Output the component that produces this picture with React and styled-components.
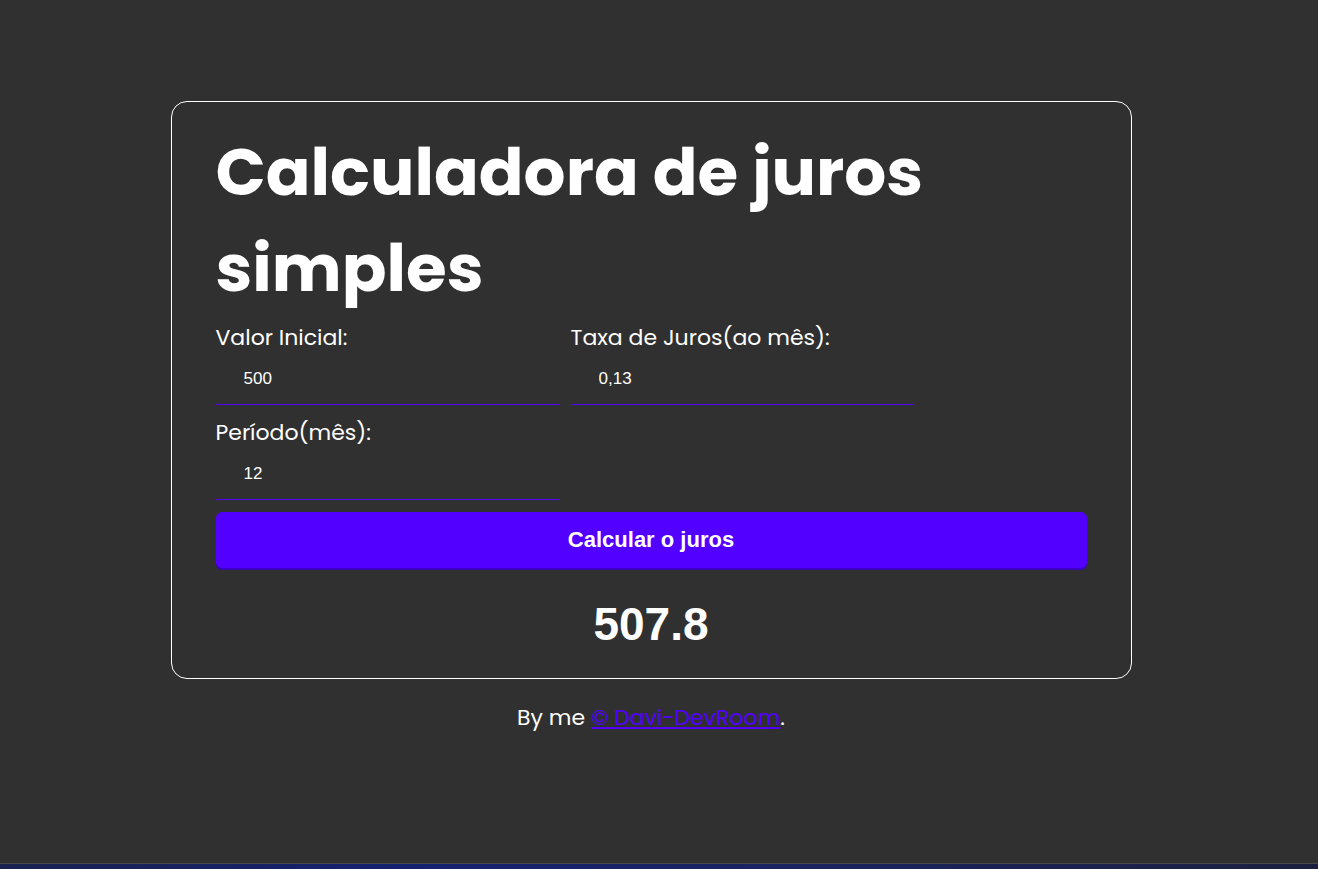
import React, { useState } from "react";
import styled, { createGlobalStyle } from "styled-components";

const GlobalStyle = createGlobalStyle`
  * { box-sizing: border-box; }
  html, body { margin: 0; padding: 0; height: 100%; }
  body {
    background: #303030;
    color: #fff;
    font-family: "Poppins", Inter, "Noto Sans", sans-serif;
    overflow: hidden;
  }
`;

const Page = styled.div`
  min-height: 100vh;
  display: flex;
  flex-direction: column;
`;

const Main = styled.main`
  flex: 1;
  padding: 101px 16px 0 0;
  display: flex;
  flex-direction: column;
  align-items: center;
`;

const Card = styled.section`
  width: 961px;
  border: 1px solid #fff;
  border-radius: 16px;
  padding: 22px 44px 27px;
`;

const Title = styled.h1`
  margin: 0 0 7px;
  font-size: 66px;
  line-height: 96px;
  font-weight: 700;
  max-width: 780px;
`;

const Fields = styled.div`
  display: grid;
  grid-template-columns: 343px 343px;
  column-gap: 12px;
  row-gap: 13px;
`;

const Field = styled.label`
  display: flex;
  flex-direction: column;
`;

const Label = styled.span`
  font-size: 22px;
  line-height: 30px;
  font-weight: 400;
`;

const Input = styled.input`
  height: 52px;
  background: transparent;
  border: none;
  border-bottom: 1px solid #5200ff;
  outline: none;
  color: #fff;
  padding: 0 0 0 28px;
  font-family: "Liberation Sans", Arial, sans-serif;
  font-size: 17px;
`;

const Button = styled.button`
  display: block;
  width: 100%;
  height: 56px;
  margin-top: 12px;
  border: none;
  border-radius: 6px;
  background: #5200ff;
  box-shadow: 0 2px 0 #3d00c0;
  color: #fff;
  font-family: "Liberation Sans", Arial, sans-serif;
  font-size: 22px;
  font-weight: 700;
  cursor: pointer;
`;

const Result = styled.h2`
  margin: 30px 0 0;
  text-align: center;
  font-family: "Liberation Sans", Arial, sans-serif;
  font-size: 46px;
  line-height: 53px;
  font-weight: 700;
`;

const Footer = styled.p`
  margin: 22px 0 0;
  font-size: 22px;
  line-height: 33px;
`;

const Link = styled.a`
  color: #5200ff;
  text-decoration: underline;
`;

const Taskbar = styled.div`
  height: 6px;
  border-top: 1px solid #4a4a4a;
  background: linear-gradient(90deg, #1a2350 0%, #142170 30%, #1a2460 60%, #1c2040 100%);
`;

export default function App() {
  const [valor, setValor] = useState("500");
  const [taxa, setTaxa] = useState("0,13");
  const [periodo, setPeriodo] = useState("12");

  return (
    <Page>
      <GlobalStyle />
      <Main>
        <Card>
          <Title>Calculadora de juros simples</Title>
          <Fields>
            <Field>
              <Label>Valor Inicial:</Label>
              <Input value={valor} onChange={(e) => setValor(e.target.value)} />
            </Field>
            <Field>
              <Label>Taxa de Juros(ao mês):</Label>
              <Input value={taxa} onChange={(e) => setTaxa(e.target.value)} />
            </Field>
            <Field>
              <Label>Período(mês):</Label>
              <Input value={periodo} onChange={(e) => setPeriodo(e.target.value)} />
            </Field>
          </Fields>
          <Button>Calcular o juros</Button>
          <Result>507.8</Result>
        </Card>
        <Footer>
          By me <Link href="#">© Davi-DevRoom</Link>.
        </Footer>
      </Main>
      <Taskbar />
    </Page>
  );
}
